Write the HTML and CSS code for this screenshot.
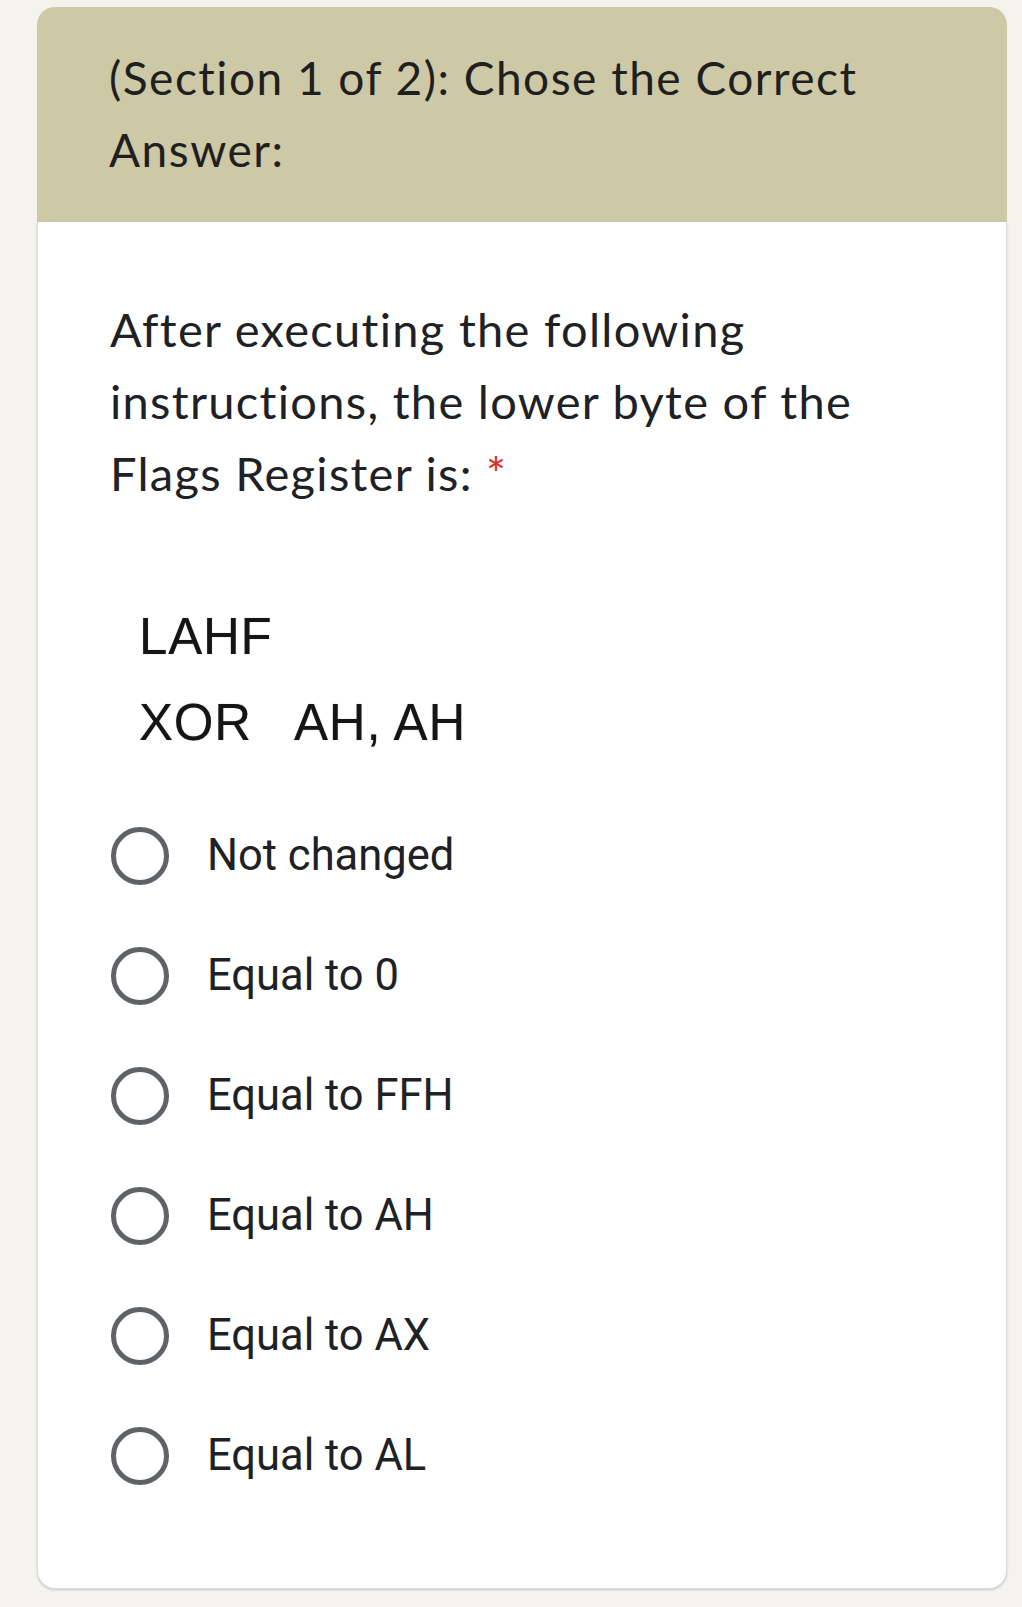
FILE: index.html
```html
<!DOCTYPE html>
<html lang="en">
<head>
<meta charset="utf-8">
<title>Section 1 of 2</title>
<link rel="stylesheet" href="styles.css">
</head>
<body>
<div class="page">
  <div class="card">
    <div class="card-header">
      <h1 class="section-title">(Section 1 of 2): Chose the Correct Answer:</h1>
    </div>
    <div class="card-body">
      <div class="question">After executing the following instructions, the lower byte of the Flags Register is: <span class="required">*</span></div>
      <div class="code">
        <div class="code-line">LAHF</div>
        <div class="code-line">XOR   AH, AH</div>
      </div>
      <div class="options">
        <label class="option"><span class="radio"></span><span class="option-text">Not changed</span></label>
        <label class="option"><span class="radio"></span><span class="option-text">Equal to 0</span></label>
        <label class="option"><span class="radio"></span><span class="option-text">Equal to FFH</span></label>
        <label class="option"><span class="radio"></span><span class="option-text">Equal to AH</span></label>
        <label class="option"><span class="radio"></span><span class="option-text">Equal to AX</span></label>
        <label class="option"><span class="radio"></span><span class="option-text">Equal to AL</span></label>
      </div>
    </div>
  </div>
</div>
</body>
</html>
```
FILE: styles.css
```css
html, body {
  margin: 0;
  padding: 0;
}
body {
  background: #f4f3ee;
  color: #202124;
}
.page {
  padding: 7px 15px 18px 37px;
}
.card {
  width: 970px;
  border-radius: 18px;
}
.card-header {
  background: #cdc8a5;
  border-radius: 18px 18px 0 0;
  padding: 35px 40px 36px 72px;
}
.section-title {
  margin: 0;
  font-family: "Lato", "Liberation Sans", sans-serif;
  font-weight: 400;
  font-size: 46px;
  line-height: 72px;
  letter-spacing: 1.5px;
  font-variant-ligatures: none;
  color: #1f1f1f;
}
.card-body {
  background: #fff;
  border: 1px solid #dadce0;
  border-top: none;
  border-radius: 0 0 18px 18px;
  box-shadow: 0 1px 2px rgba(60, 64, 67, 0.25);
  padding: 71px 40px 72px 72px;
}
.question {
  font-family: "Lato", "Liberation Sans", sans-serif;
  font-size: 47px;
  line-height: 72px;
  letter-spacing: 1.3px;
  font-variant-ligatures: none;
  color: #202124;
  width: 800px;
}
.required {
  color: #d93025;
}
.code {
  margin: 85px 0 0 29px;
  font-family: "Liberation Sans", Arial, sans-serif;
  font-size: 51px;
  line-height: 86px;
  letter-spacing: 0.8px;
  color: #151515;
  text-shadow: 0 0 1px rgba(0, 0, 0, 0.45);
}
.code-line {
  white-space: pre;
}
.options {
  margin-top: 30px;
  display: flex;
  flex-direction: column;
}
.option {
  height: 120px;
  display: flex;
  align-items: center;
}
.radio {
  width: 58px;
  height: 58px;
  box-sizing: border-box;
  border: 5px solid #5f6368;
  border-radius: 50%;
  margin-left: 1px;
  flex: none;
}
.option-text {
  margin-left: 38px;
  font-family: "Roboto", "Liberation Sans", sans-serif;
  font-size: 43.5px;
  line-height: 60px;
  color: #202124;
}
```
